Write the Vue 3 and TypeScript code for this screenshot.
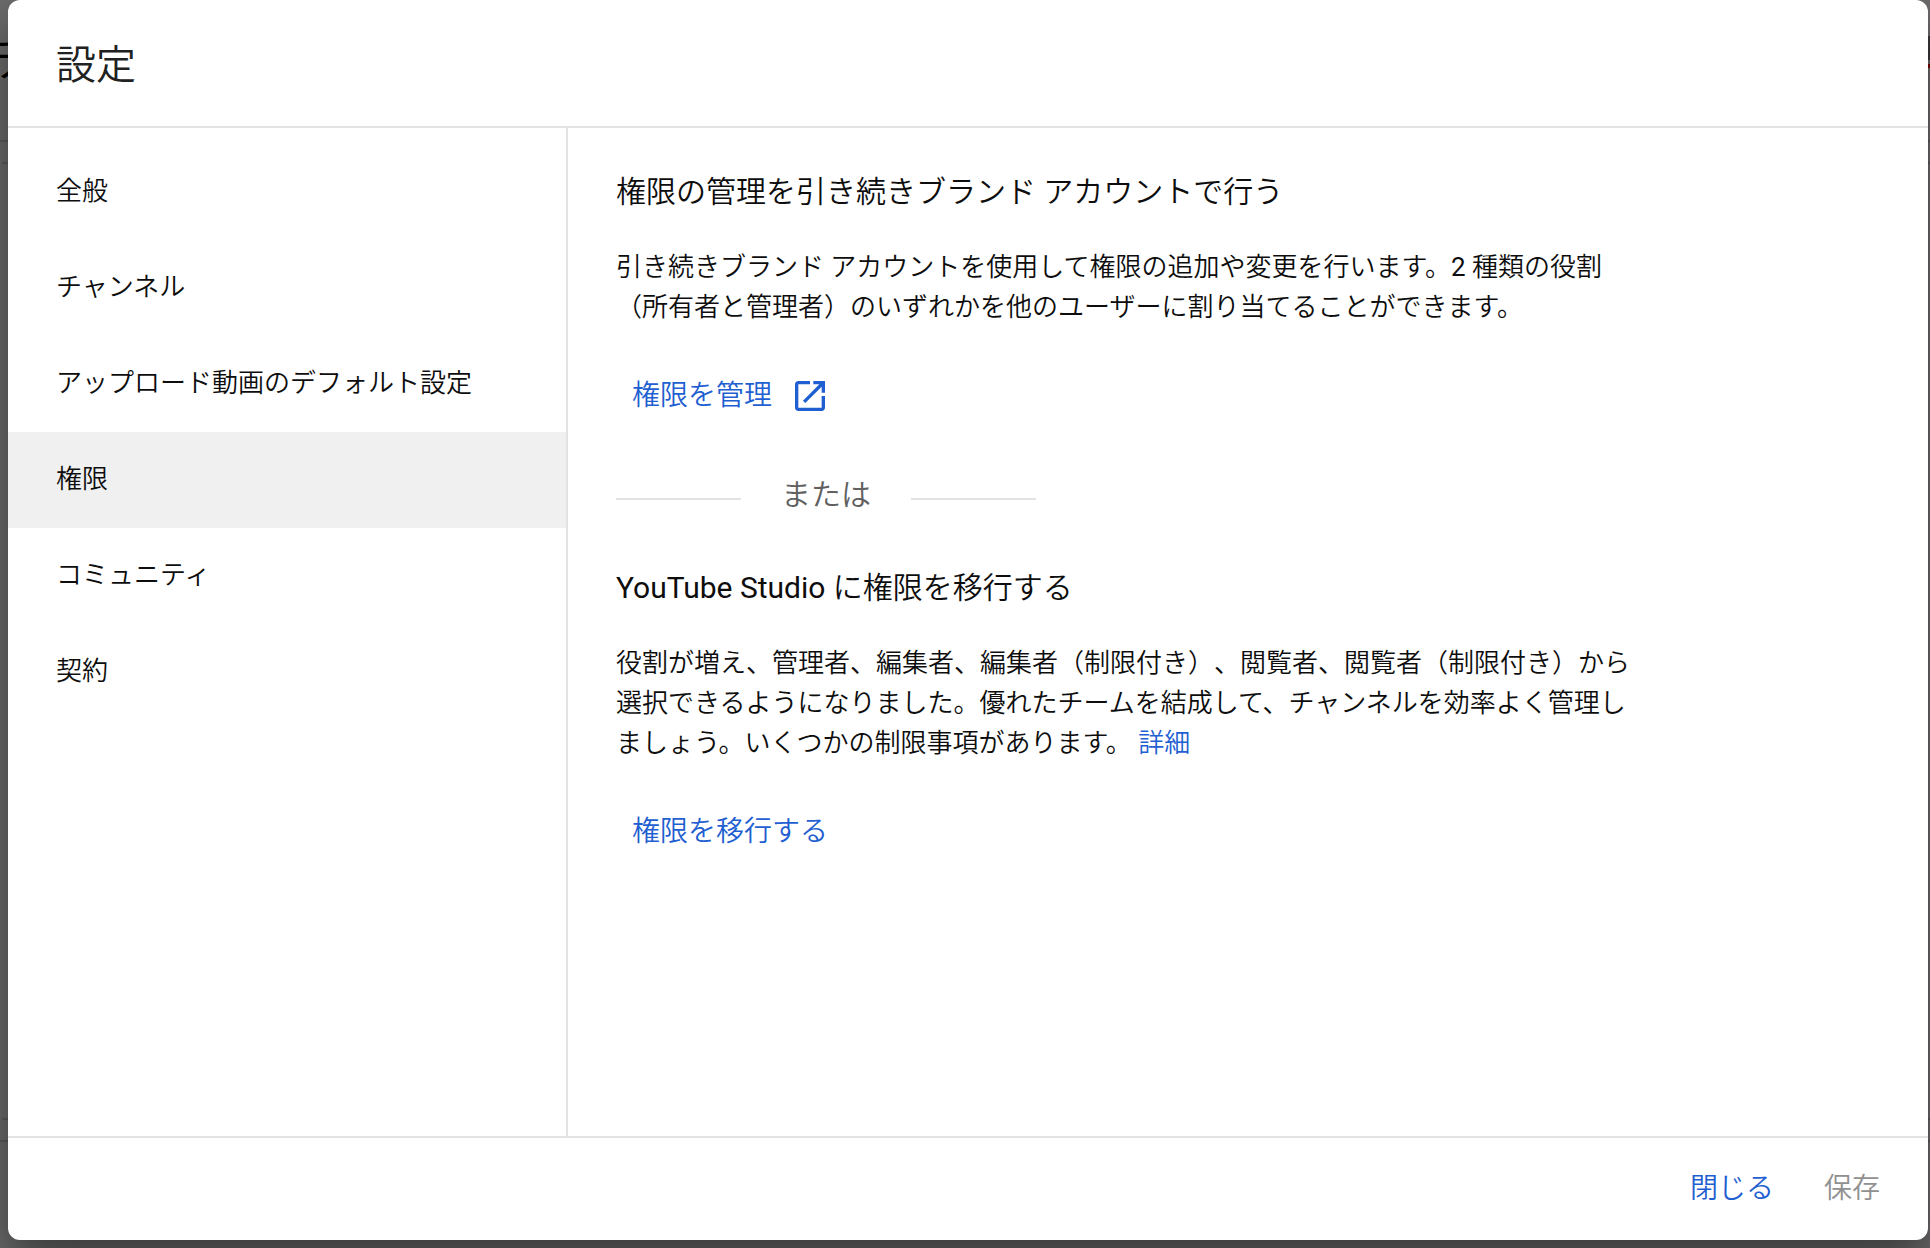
<script setup lang="ts">
import { ref } from 'vue'

interface Section {
  id: string
  label: string
}

const sections: Section[] = [
  { id: 'general', label: '全般' },
  { id: 'channel', label: 'チャンネル' },
  { id: 'defaults', label: 'アップロード動画のデフォルト設定' },
  { id: 'permissions', label: '権限' },
  { id: 'community', label: 'コミュニティ' },
  { id: 'agreements', label: '契約' },
]

const selected = ref<string>('permissions')
</script>

<template>
  <div class="screen">
    <div class="page" aria-hidden="true">
      <span class="page-title">チ</span>
      <i class="rule rule-toolbar"></i>
      <i class="rule rule-card-top"></i>
      <i class="rule rule-card-bottom"></i>
      <i class="rule rule-footer"></i>
      <i class="create-button"></i>
      <i class="create-mark"></i>
    </div>

    <div class="dialog" role="dialog" aria-labelledby="dialog-title">
      <header class="header">
        <h1 id="dialog-title">設定</h1>
      </header>

      <div class="body">
        <nav class="sidebar">
          <button
            v-for="section in sections"
            :key="section.id"
            type="button"
            class="nav-item"
            :class="{ active: section.id === selected }"
            @click="selected = section.id"
          >
            {{ section.label }}
          </button>
        </nav>

        <main class="content">
          <section>
            <h2>権限の管理を引き続きブランド アカウントで行う</h2>
            <p>
              引き続きブランド アカウントを使用して権限の追加や変更を行います。<span class="latin">2</span> 種類の役割（所有者と管理者）のいずれかを他のユーザーに割り当てることができます。
            </p>
            <a class="action" href="#manage">
              権限を管理
              <svg class="open-icon" viewBox="0 0 24 24" aria-hidden="true">
                <path
                  d="M19 19H5V5h7V3H5c-1.11 0-2 .9-2 2v14c0 1.1.89 2 2 2h14c1.1 0 2-.9 2-2v-7h-2v7zM14 3v2h3.59l-9.83 9.83 1.41 1.41L19 6.41V10h2V3h-7z"
                />
              </svg>
            </a>
          </section>

          <div class="divider"><span>または</span></div>

          <section>
            <h2><span class="latin">YouTube Studio</span> に権限を移行する</h2>
            <p>
              役割が増え、管理者、編集者、編集者（制限付き）、閲覧者、閲覧者（制限付き）から選択できるようになりました。優れたチームを結成して、チャンネルを効率よく管理しましょう。いくつかの制限事項があります。 <a href="#details">詳細</a>
            </p>
            <button type="button" class="action">権限を移行する</button>
          </section>
        </main>
      </div>

      <footer class="footer">
        <button type="button" class="close">閉じる</button>
        <button type="button" class="save" disabled>保存</button>
      </footer>
    </div>
  </div>
</template>

<style>
body {
  background: #666;
}
</style>

<style scoped>
.screen {
  position: relative;
  box-sizing: border-box;
  display: flex;
  min-height: 100vh;
  padding: 0 2px 8px 8px;
  overflow: hidden;
  background: #6b6b6b;
  color: #0d0d0d;
  font-family: Roboto, 'Noto Sans CJK JP', sans-serif;
  font-size: 26px;
  font-weight: 350;
  line-height: 40px;
  text-spacing-trim: space-all;
}

.page {
  position: absolute;
  inset: 0;
}

.page-title {
  position: absolute;
  top: 36px;
  left: -10px;
  color: #000;
  font-size: 48px;
  line-height: 48px;
}

.rule {
  position: absolute;
  left: 0;
  right: 0;
  height: 2px;
  background: #5c5c5c;
}

.rule-toolbar {
  top: 140px;
}

.rule-card-top {
  top: 162px;
  left: 2px;
}

.rule-card-bottom {
  bottom: 128px;
  left: 2px;
}

.rule-footer {
  bottom: 106px;
}

.create-button,
.create-mark {
  position: absolute;
  right: 0;
  width: 40px;
}

.create-button {
  top: 36px;
  height: 24px;
  background: #383838;
}

.create-mark {
  top: 64px;
  height: 4px;
  background: #7a0000;
}

.dialog {
  position: relative;
  flex: 1;
  display: flex;
  flex-direction: column;
  border-radius: 12px;
  background: #fff;
  box-shadow: 0 24px 48px rgba(0, 0, 0, 0.45);
}

.header {
  padding: 38px 48px 32px;
  border-bottom: 2px solid #e3e3e3;
}

h1,
h2,
p {
  margin: 0;
  font-weight: inherit;
}

h1 {
  color: #212121;
  font-size: 40px;
  line-height: 56px;
}

.body {
  flex: 1;
  display: flex;
}

.sidebar {
  box-sizing: border-box;
  flex: none;
  width: 560px;
  padding-top: 16px;
  border-right: 2px solid #e3e3e3;
}

button {
  padding: 0;
  border: 0;
  background: none;
  color: inherit;
  font: inherit;
  cursor: pointer;
}

.nav-item {
  display: block;
  width: 100%;
  height: 96px;
  padding: 0 48px 2px;
  text-align: left;
}

.nav-item.active {
  background: #f0f0f0;
}

.content {
  flex: 1;
  padding: 42px 48px;
}

h2 {
  margin-bottom: 33px;
  font-size: 30px;
  line-height: 44px;
}

p {
  max-width: 1020px;
}

.latin {
  font-weight: 400;
}

a,
.action,
.close {
  color: #1f5fd1;
  text-decoration: none;
}

.action {
  display: flex;
  align-items: center;
  gap: 18px;
  width: fit-content;
  height: 72px;
  margin-top: 33px;
  padding: 0 16px;
  font-size: 28px;
}

.open-icon {
  width: 40px;
  height: 40px;
  fill: currentColor;
}

.divider {
  display: flex;
  align-items: center;
  gap: 40px;
  width: 420px;
  margin: 41px 0;
  color: #606060;
  font-size: 30px;
  line-height: 44px;
}

.divider span {
  padding-bottom: 8px;
}

.divider::before,
.divider::after {
  content: '';
  flex: 1;
  height: 2px;
  background: #e3e3e3;
}

.footer {
  display: flex;
  justify-content: flex-end;
  gap: 50px;
  padding: 31px 48px;
  border-top: 2px solid #e3e3e3;
  font-size: 28px;
}

.save {
  color: #909090;
  cursor: default;
}
</style>
